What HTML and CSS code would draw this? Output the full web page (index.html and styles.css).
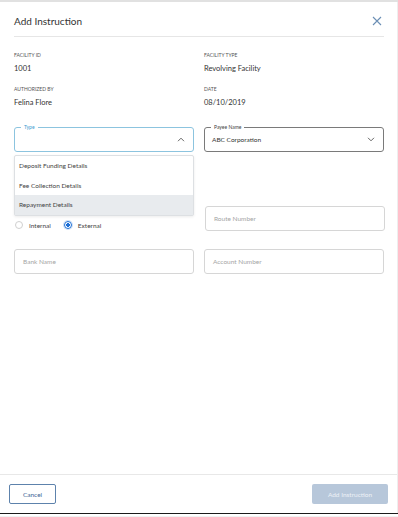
FILE: index.html
```html
<!DOCTYPE html>
<html lang="en">
<head>
  <meta charset="UTF-8">
  <meta name="viewport" content="width=device-width, initial-scale=1.0">
  <title>Add Instruction</title>
  <link rel="stylesheet" href="styles.css">
</head>
<body>
  <div class="top-strip"></div>
  <div class="modal">
    <div class="modal-header">
      <h1>Add Instruction</h1>
      <span class="close-btn">
        <svg width="10" height="10" viewBox="0 0 10 10"><path d="M1 1L9 9M9 1L1 9" stroke="#6b8fb5" stroke-width="1.1" fill="none"/></svg>
      </span>
    </div>

    <div class="info-grid">
      <div class="info-item">
        <div class="info-label">Facility ID</div>
        <div class="info-value">1001</div>
      </div>
      <div class="info-item">
        <div class="info-label">Facility Type</div>
        <div class="info-value">Revolving Facility</div>
      </div>
      <div class="info-item">
        <div class="info-label">Authorized By</div>
        <div class="info-value">Felina Flore</div>
      </div>
      <div class="info-item">
        <div class="info-label">Date</div>
        <div class="info-value">08/10/2019</div>
      </div>
    </div>

    <div class="form">
      <div class="form-row first">
        <div class="field-wrap">
          <div class="outlined focused">
            <span class="legend">Type</span>
            <span class="value"></span>
            <svg class="chev" width="8" height="5" viewBox="0 0 8 5"><path d="M1 4.2L4 1.2L7 4.2" stroke="#555" stroke-width="0.9" fill="none"/></svg>
          </div>
          <ul class="dropdown">
            <li>Deposit Funding Details</li>
            <li>Fee Collection Details</li>
            <li class="active">Repayment Details</li>
          </ul>
        </div>
        <div class="field-wrap">
          <div class="outlined">
            <span class="legend dark">Payee Name</span>
            <span class="value">ABC Corporation</span>
            <svg class="chev" width="8" height="5" viewBox="0 0 8 5"><path d="M1 0.8L4 3.8L7 0.8" stroke="#555" stroke-width="0.9" fill="none"/></svg>
          </div>
        </div>
      </div>

      <div class="form-row second">
        <div class="radio-row">
          <label class="radio"><span class="dot"></span>Internal</label>
          <label class="radio"><span class="dot checked"></span>External</label>
        </div>
        <div class="input-box">Route Number</div>
      </div>

      <div class="form-row third">
        <div class="input-box">Bank Name</div>
        <div class="input-box">Account Number</div>
      </div>
    </div>

    <div class="spacer"></div>

    <div class="modal-footer">
      <button class="btn-outline">Cancel</button>
      <button class="btn-primary">Add Instruction</button>
    </div>
  </div>
  <div class="bottom-line"></div>
  <div class="bottom-gap"></div>
</body>
</html>
```

FILE: styles.css
```css
/* Page */
body {
  margin: 0;
  padding: 0;
  font-family: 'Lato', 'Open Sans', sans-serif;
  color: #333;
  background: #fff;
  width: 398px;
  height: 517px;
  overflow: hidden;
  display: flex;
  flex-direction: column;
}

.top-strip {
  height: 2px;
  background: #e1e1e1;
  flex-shrink: 0;
}

.modal {
  flex: 1;
  display: flex;
  flex-direction: column;
  border-right: 1px solid #eee;
}

/* Header */
.modal-header {
  margin: 0 13px 0 14px;
  height: 35px;
  padding-top: 4px;
  box-sizing: border-box;
  display: flex;
  align-items: center;
  justify-content: space-between;
  border-bottom: 1px solid #e6e6e6;
}

.modal-header h1 {
  margin: 0;
  font-size: 10px;
  font-weight: 400;
  color: #333;
}

.close-btn {
  display: flex;
  margin-right: 2px;
}

/* Facility info */
.info-grid {
  margin: 0 14px;
  padding-top: 14px;
  display: grid;
  grid-template-columns: 180px 180px;
  column-gap: 10px;
  row-gap: 11px;
}

.info-label {
  font-size: 5px;
  text-transform: uppercase;
  color: #555;
  line-height: 8px;
}

.info-value {
  font-size: 7.5px;
  color: #333;
  line-height: 10px;
  margin-top: 5px;
}

/* Form */
.form {
  margin: 0 14px;
}

.form-row {
  display: flex;
  gap: 10px;
}

.form-row > * {
  width: 180px;
  flex-shrink: 0;
}

.form-row.first {
  margin-top: 19px;
}

.form-row.second {
  margin-top: 54px;
  align-items: flex-end;
}

.form-row.third {
  margin-top: 18px;
}

.field-wrap {
  position: relative;
}

.outlined {
  position: relative;
  height: 25px;
  box-sizing: border-box;
  border: 1px solid #7a7a7a;
  border-radius: 3px;
  display: flex;
  align-items: center;
  padding: 0 8px 0 7px;
}

.outlined.focused {
  border-color: #8cc4df;
}

.outlined .legend {
  position: absolute;
  top: -4px;
  left: 6px;
  padding: 0 3px;
  background: #fff;
  font-size: 5px;
  line-height: 7px;
  color: #3a9ad0;
}

.outlined .legend.dark {
  color: #444;
}

.outlined .value {
  flex: 1;
  font-size: 6.5px;
  color: #333;
}

.chev {
  display: block;
}

.dropdown {
  position: absolute;
  top: 28px;
  left: 0;
  right: 0;
  margin: 0;
  padding: 0;
  list-style: none;
  background: #fff;
  border: 1px solid #dde0e3;
  border-radius: 2px;
  box-shadow: 0 1px 3px rgba(0, 0, 0, 0.08);
  z-index: 2;
}

.dropdown li {
  height: 19.5px;
  line-height: 19.5px;
  padding-left: 4px;
  font-size: 6.5px;
  color: #444;
}

.dropdown li.active {
  background: #e8ebee;
}

.radio-row {
  display: flex;
  align-items: center;
  gap: 13px;
  padding-left: 1px;
  margin-bottom: 2px;
}

.radio {
  display: flex;
  align-items: center;
  gap: 6px;
  font-size: 6.5px;
  color: #444;
}

.dot {
  width: 8px;
  height: 8px;
  border: 1px solid #d0d0d0;
  border-radius: 50%;
  box-sizing: border-box;
}

.dot.checked {
  border: 1.5px solid #1d6fd6;
  background: radial-gradient(circle, #1d6fd6 0 1.6px, #fff 1.9px);
  box-shadow: 0 0 0 1px #cfe0f5;
}

.input-box {
  height: 25px;
  box-sizing: border-box;
  border: 1px solid #d6d6d6;
  border-radius: 3px;
  padding-left: 8px;
  display: flex;
  align-items: center;
  font-size: 6.5px;
  color: #a5a5a5;
}

.spacer {
  flex: 1;
}

/* Footer */
.modal-footer {
  border-top: 1px solid #e8e8e8;
  height: 39px;
  box-sizing: border-box;
  padding: 0 9px;
  display: flex;
  align-items: center;
  justify-content: space-between;
}

.modal-footer button {
  font-family: 'Lato', 'Open Sans', sans-serif;
  font-size: 6.5px;
  height: 20px;
  border-radius: 2px;
  cursor: pointer;
}

.btn-outline {
  width: 47px;
  background: #fff;
  border: 1px solid #5d82ac;
  color: #3e6695;
}

.btn-primary {
  width: 76px;
  background: #b7c7da;
  border: none;
  color: #eef2f7;
}

.bottom-line {
  height: 1px;
  background: #1a1a1a;
  flex-shrink: 0;
}

.bottom-gap {
  height: 3px;
  flex-shrink: 0;
  border-bottom: 1px solid #f0f0f0;
  box-sizing: border-box;
}
```
